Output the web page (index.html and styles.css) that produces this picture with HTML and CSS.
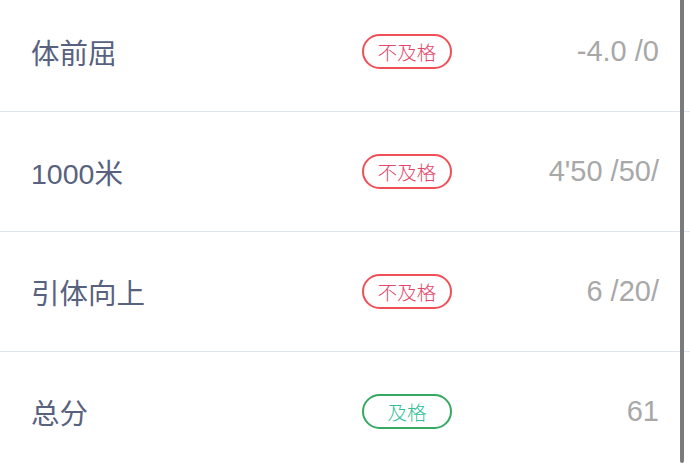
FILE: index.html
```html
<!DOCTYPE html>
<html lang="zh">
<head>
<meta charset="utf-8">
<link rel="stylesheet" href="styles.css">
</head>
<body>
<div class="list">
  <div class="row">
    <div class="label">体前屈</div>
    <div class="badge fail">不及格</div>
    <div class="value">-4.0 /0</div>
  </div>
  <div class="row">
    <div class="label">1000米</div>
    <div class="badge fail">不及格</div>
    <div class="value">4'50 /50/</div>
  </div>
  <div class="row">
    <div class="label">引体向上</div>
    <div class="badge fail">不及格</div>
    <div class="value">6 /20/</div>
  </div>
  <div class="row">
    <div class="label">总分</div>
    <div class="badge pass">及格</div>
    <div class="value">61</div>
  </div>
</div>
<div class="scrollbar"></div>
</body>
</html>
```

FILE: styles.css
```css
html, body {
  margin: 0;
  padding: 0;
  background: #ffffff;
  width: 690px;
  height: 471px;
  overflow: hidden;
  font-family: "Liberation Sans", "Noto Sans CJK SC", sans-serif;
}

.list {
  margin-top: -8px;
}

.row {
  height: 119px;
  border-bottom: 1px solid #dfe5ec;
  display: grid;
  grid-template-columns: 331px 90px 1fr;
  align-items: center;
  padding: 0 31px;
}

.label {
  font-size: 28.5px;
  color: #58627f;
}

.badge {
  box-sizing: border-box;
  height: 35px;
  width: 90px;
  border-radius: 18px;
  border: 2px solid;
  display: flex;
  align-items: center;
  justify-content: center;
  font-size: 19.5px;
  font-weight: 300;
  font-family: "Noto Sans CJK SC", sans-serif;
}

.badge.fail {
  border-color: #f14f57;
  color: #e6456a;
}

.badge.pass {
  border-color: #35a862;
  color: #2fc098;
}

.value {
  text-align: right;
  font-size: 29px;
  color: #a8a8a8;
}

.scrollbar {
  position: absolute;
  top: 0;
  left: 680px;
  width: 3.5px;
  height: 463px;
  background: #7b7b7b;
  border-radius: 0 0 2px 2px;
}
```
